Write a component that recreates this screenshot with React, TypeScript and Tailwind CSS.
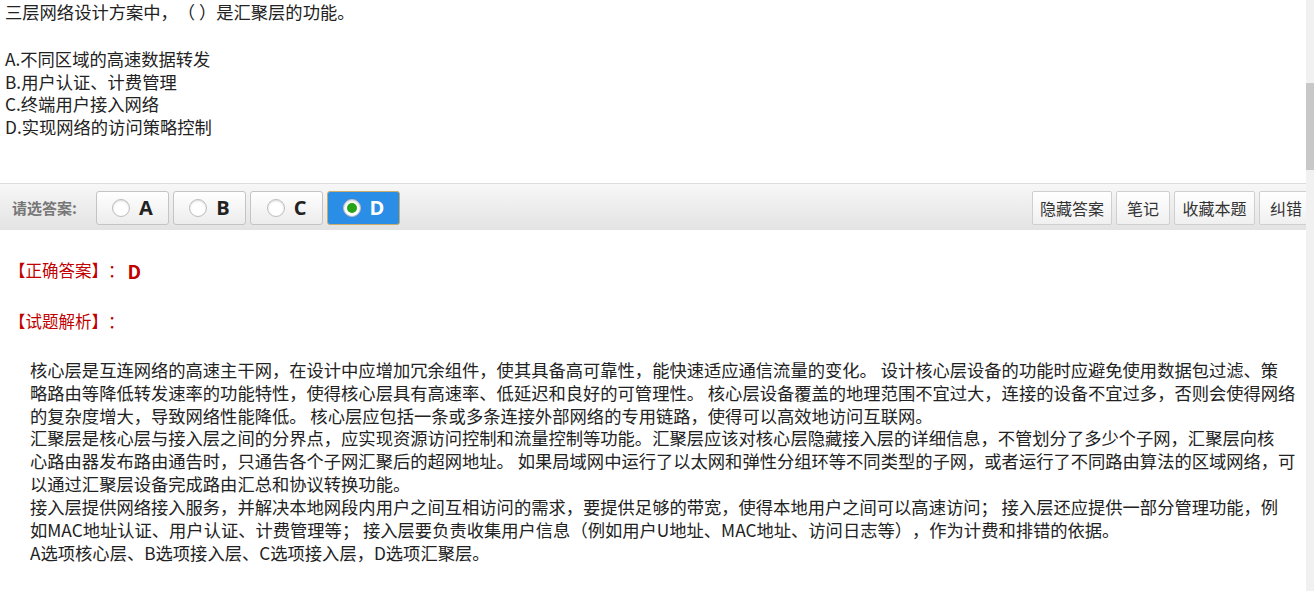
import React from "react";

const FONT = { fontFamily: "'Noto Sans CJK SC', 'Microsoft YaHei', sans-serif" };

const questionLines = [
    "A.不同区域的高速数据转发",
    "B.用户认证、计费管理",
    "C.终端用户接入网络",
    "D.实现网络的访问策略控制",
];

const analysisLines = [
    "核心层是互连网络的高速主干网，在设计中应增加冗余组件，使其具备高可靠性，能快速适应通信流量的变化。 设计核心层设备的功能时应避免使用数据包过滤、策",
    "略路由等降低转发速率的功能特性，使得核心层具有高速率、低延迟和良好的可管理性。 核心层设备覆盖的地理范围不宜过大，连接的设备不宜过多，否则会使得网络",
    "的复杂度增大，导致网络性能降低。 核心层应包括一条或多条连接外部网络的专用链路，使得可以高效地访问互联网。",
    "汇聚层是核心层与接入层之间的分界点，应实现资源访问控制和流量控制等功能。汇聚层应该对核心层隐藏接入层的详细信息，不管划分了多少个子网，汇聚层向核",
    "心路由器发布路由通告时，只通告各个子网汇聚后的超网地址。 如果局域网中运行了以太网和弹性分组环等不同类型的子网，或者运行了不同路由算法的区域网络，可",
    "以通过汇聚层设备完成路由汇总和协议转换功能。",
    "接入层提供网络接入服务，并解决本地网段内用户之间互相访问的需求，要提供足够的带宽，使得本地用户之间可以高速访问； 接入层还应提供一部分管理功能，例",
    "如MAC地址认证、用户认证、计费管理等； 接入层要负责收集用户信息（例如用户U地址、MAC地址、访问日志等），作为计费和排错的依据。",
    "A选项核心层、B选项接入层、C选项接入层，D选项汇聚层。",
];

function ChoiceButton({ letter, selected }: { letter: string; selected?: boolean }) {
    return (
        <button
            type="button"
            className={
                selected
                    ? "flex h-[34px] w-[73px] items-center justify-center gap-[9px] rounded-[3px] border border-[#c9ab6a] bg-[#2a8de6] text-white"
                    : "flex h-[34px] w-[73px] items-center justify-center gap-[9px] rounded-[3px] border border-[#c4c4c4] bg-gradient-to-b from-white to-[#ececec] text-[#222]"
            }
        >
            <span className="flex size-[18px] items-center justify-center rounded-full border border-[#bdbdbd] bg-white shadow-[inset_0_1px_2px_rgba(0,0,0,0.15)]">
                {selected && <span className="size-[10px] rounded-full bg-[#27a316]" />}
            </span>
            <span className="text-[20px] font-bold leading-none" style={{ fontFamily: "'Open Sans', sans-serif" }}>
                {letter}
            </span>
        </button>
    );
}

function ToolButton({ label, width }: { label: string; width: string }) {
    return (
        <button
            type="button"
            className={`flex h-[34px] ${width} shrink-0 items-center justify-center rounded-[2px] border border-[#cfcfcf] bg-gradient-to-b from-white to-[#f0f0f0] text-[16px] text-[#333]`}
        >
            {label}
        </button>
    );
}

export default function App() {
    return (
        <div className="flex h-[591px] w-[1314px] overflow-hidden bg-white [text-spacing-trim:space-all]" style={FONT}>
            <div className="w-[1306px] shrink-0 overflow-hidden">
                <div className="w-[1330px]">
                    {/* question */}
                    <div className="pl-[5px] text-[17.3px] leading-[23px] text-[#222]">
                        <p className="whitespace-nowrap">三层网络设计方案中，（ ）是汇聚层的功能。</p>
                        <div className="h-[24px]" />
                        {questionLines.map((line) => (
                            <p key={line} className="h-[22.7px] whitespace-nowrap">
                                {line}
                            </p>
                        ))}
                    </div>

                    {/* answer toolbar */}
                    <div className="mt-[45px] flex h-[47px] w-[1313px] items-start border-t border-[#dcdcdc] bg-gradient-to-b from-[#f7f7f7] to-[#e3e3e3] pt-[7px]">
                        <div className="flex h-[34px] w-[96px] items-center pl-[12px] text-[15px] font-bold text-[#777]">
                            请选答案:
                        </div>
                        <div className="flex gap-[4px]">
                            <ChoiceButton letter="A" />
                            <ChoiceButton letter="B" />
                            <ChoiceButton letter="C" />
                            <ChoiceButton letter="D" selected />
                        </div>
                        <div className="ml-auto flex gap-[4px]">
                            <ToolButton label="隐藏答案" width="w-[80px]" />
                            <ToolButton label="笔记" width="w-[54px]" />
                            <ToolButton label="收藏本题" width="w-[81px]" />
                            <ToolButton label="纠错" width="w-[54px]" />
                        </div>
                    </div>

                    {/* result */}
                    <div className="pl-[9px] text-[16.5px] text-[#c00000]">
                        <p className="mt-[30px] flex h-[22px] items-center">
                            <span>【正确答案】：</span>
                            <span className="ml-[3px] text-[19px] font-bold">D</span>
                        </p>
                        <p className="mt-[29px] flex h-[22px] items-center">【试题解析】：</p>
                    </div>

                    <div className="mt-[26px] pl-[30px] text-[17.3px] leading-[22.9px] text-[#222]">
                        {analysisLines.map((line) => (
                            <p key={line} className="whitespace-nowrap">
                                {line}
                            </p>
                        ))}
                    </div>
                </div>
            </div>

            {/* scrollbar */}
            <div className="w-[8px] shrink-0 bg-[#f1f1f1]">
                <div className="mt-[83px] h-[87px] w-full bg-[#c8c8c8]" />
            </div>
        </div>
    );
}
